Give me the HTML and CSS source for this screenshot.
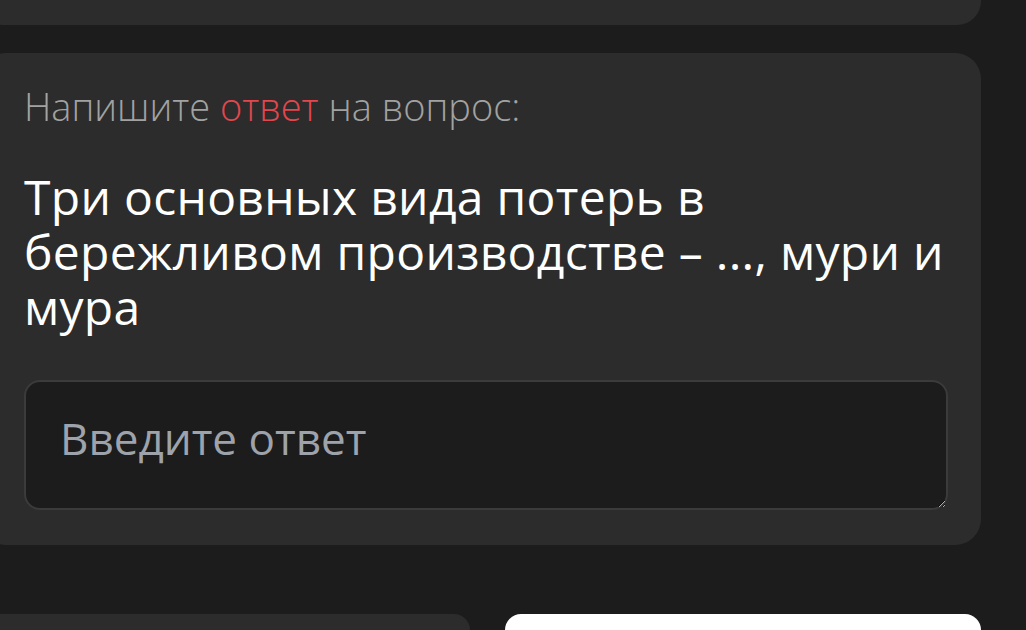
FILE: index.html
```html
<!DOCTYPE html>
<html lang="ru">
<head>
<meta charset="utf-8">
<link rel="stylesheet" href="styles.css">
</head>
<body>
<div class="page">
  <div class="card card-top"></div>
  <div class="card card-question">
    <p class="hint">Напишите <span class="accent">ответ</span> на вопрос:</p>
    <h1 class="question">Три основных вида потерь в бережливом производстве – ..., мури и мура</h1>
    <textarea class="answer" placeholder="Введите ответ"></textarea>
  </div>
  <div class="actions">
    <div class="btn btn-dark"></div>
    <div class="btn btn-light"></div>
  </div>
</div>
</body>
</html>
```

FILE: styles.css
```css
html, body {
  margin: 0;
  padding: 0;
  background: #1c1c1c;
  overflow: hidden;
  height: 630px;
}
.page {
  display: flex;
  flex-direction: column;
  margin-left: -20px;
  width: 1001px;
}
.card {
  background: #2c2c2c;
  border-radius: 26px;
}
.card-top {
  height: 25px;
  border-radius: 0 0 24px 24px;
}
.card-question {
  margin-top: 28px;
  height: 492px;
  box-sizing: border-box;
  padding: 0 33px 0 44px;
  display: flex;
  flex-direction: column;
}
.hint {
  margin: 28px 0 0;
  font-family: "Open Sans", sans-serif;
  font-weight: 300;
  font-size: 38px;
  line-height: 50px;
  color: #a2a2a2;
}
.accent {
  color: #e2474d;
}
.question {
  margin: 38px 0 0;
  font-family: "Open Sans", sans-serif;
  font-weight: 500;
  font-size: 48px;
  letter-spacing: 0.3px;
  line-height: 55px;
  color: #ffffff;
}
.answer {
  margin-top: 46px;
  width: 924px;
  height: 130px;
  box-sizing: border-box;
  background: #1c1c1c;
  border: 2px solid #3b3b3b;
  border-radius: 16px;
  padding: 31px 34px;
  font-family: "Open Sans", sans-serif;
  font-size: 44px;
  line-height: 50px;
  color: #e0e0e0;
  outline: none;
}
.answer::placeholder {
  color: #9ea3ab;
}
.actions {
  margin-top: 69px;
  display: flex;
  gap: 35px;
}
.btn {
  height: 16px;
  border-radius: 22px 22px 0 0;
}
.btn-dark {
  width: 490px;
  background: #2c2c2c;
}
.btn-light {
  width: 476px;
  background: #ffffff;
}
```
